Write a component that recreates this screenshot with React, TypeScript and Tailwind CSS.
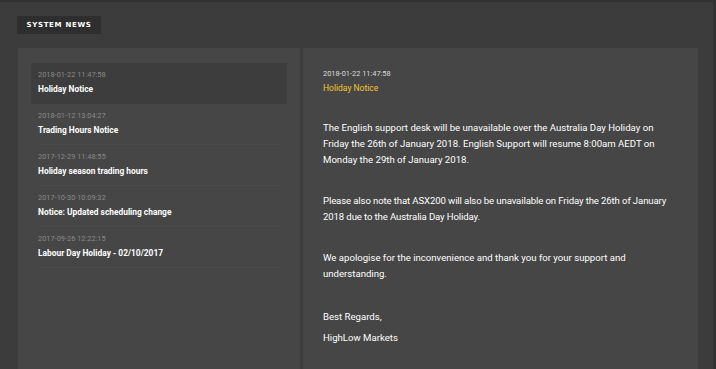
import React from 'react';

const news = [
  { date: '2018-01-22 11:47:58', title: 'Holiday Notice' },
  { date: '2018-01-12 13:04:27', title: 'Trading Hours Notice' },
  { date: '2017-12-29 11:48:55', title: 'Holiday season trading hours' },
  { date: '2017-10-30 10:09:32', title: 'Notice: Updated scheduling change' },
  { date: '2017-09-26 12:22:15', title: 'Labour Day Holiday - 02/10/2017' },
];

export default function App() {
  return (
    <div className="w-[716px] h-[369px] overflow-hidden bg-[#3c3c3c] flex font-['Roboto',sans-serif]">
      <div className="flex-1 flex flex-col border-t-2 border-[#333333]">
        {/* Header */}
        <div className="flex pl-[17px] pt-[14px] pb-[14px]">
          <div className="bg-[#2e2e2e] h-[18px] w-[84px] flex items-center justify-center text-[7px] font-bold tracking-[0.1em] text-white font-['DejaVu_Sans',sans-serif]">
            SYSTEM NEWS
          </div>
        </div>

        <div className="flex flex-1 pl-[18px] pr-[15px] gap-[3px]">
          {/* News list */}
          <div className="w-[282px] bg-[#464646] pt-[15px] px-[13px]">
            {news.map((n, i) => (
              <div
                key={i}
                className={`px-[7px] h-[41px] pt-[6px] ${i === 0 ? 'bg-[#3d3d3d]' : ''}`}
              >
                <div className={`h-full ${i === 0 ? '' : 'border-b border-[#4b4b4b]'}`}>
                  <div className="text-[7.4px] leading-[11px] text-[#8a8a8a]">{n.date}</div>
                  <div className="text-[8.4px] leading-[14px] mt-[2px] font-bold text-white">{n.title}</div>
                </div>
              </div>
            ))}
          </div>

          {/* Detail */}
          <div className="flex-1 bg-[#464646] pl-[20px] pr-[19px] pt-[20px] text-[9.6px] text-white">
            <div className="text-[7.4px] leading-[11px] text-[#dddddd]">2018-01-22 11:47:58</div>
            <div className="text-[8.5px] leading-[14px] mt-[2px] text-[#f4c42f]">Holiday Notice</div>
            <p className="mt-[25px] leading-[16px]">
              The English support desk will be unavailable over the Australia Day Holiday on Friday the 26th of January 2018. English Support will resume 8:00am AEDT on Monday the 29th of January 2018.
            </p>
            <p className="mt-[25px] leading-[16px] tracking-[-0.12px]">
              Please also note that ASX200 will also be unavailable on Friday the 26th of January 2018 due to the Australia Day Holiday.
            </p>
            <p className="mt-[25px] leading-[16px]">
              We apologise for the inconvenience and thank you for your support and understanding.
            </p>
            <p className="mt-[27px] leading-[16px]">Best Regards,</p>
            <p className="mt-[5px] leading-[16px]">HighLow Markets</p>
          </div>
        </div>
      </div>
      <div className="w-[3px] bg-[#333333]" />
    </div>
  );
}
